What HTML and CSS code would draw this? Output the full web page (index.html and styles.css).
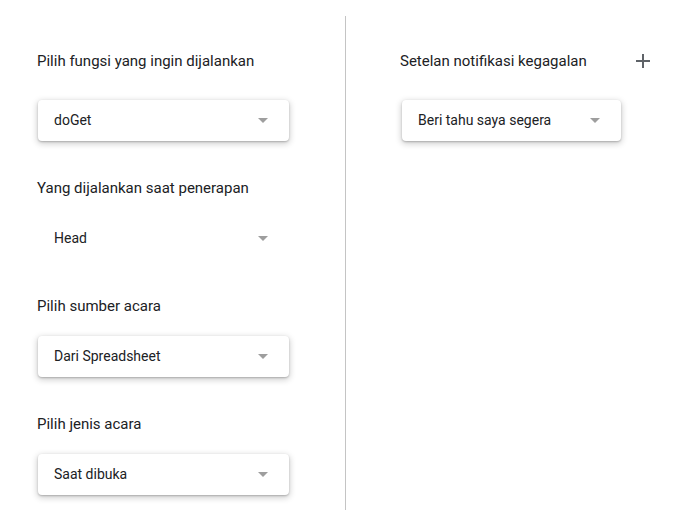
FILE: index.html
```html
<!DOCTYPE html>
<html lang="id">
<head>
<meta charset="utf-8">
<link rel="stylesheet" href="styles.css">
</head>
<body>
<div class="page">
  <div class="col-left">
    <section class="field field--first">
      <div class="label">Pilih fungsi yang ingin dijalankan</div>
      <div class="select select--card"><span class="select-text">doGet</span><span class="arrow"></span></div>
    </section>
    <section class="field">
      <div class="label">Yang dijalankan saat penerapan</div>
      <div class="select"><span class="select-text">Head</span><span class="arrow"></span></div>
    </section>
    <section class="field">
      <div class="label">Pilih sumber acara</div>
      <div class="select select--card"><span class="select-text">Dari Spreadsheet</span><span class="arrow"></span></div>
    </section>
    <section class="field">
      <div class="label">Pilih jenis acara</div>
      <div class="select select--card"><span class="select-text">Saat dibuka</span><span class="arrow"></span></div>
    </section>
  </div>
  <div class="divider"></div>
  <div class="col-right">
    <section class="field field--first">
      <div class="header-row">
        <div class="label">Setelan notifikasi kegagalan</div>
        <svg class="plus" width="14" height="14" viewBox="0 0 14 14"><path d="M7 0v14M0 7h14" stroke="#5f6368" stroke-width="2"/></svg>
      </div>
      <div class="select select--card select--narrow"><span class="select-text">Beri tahu saya segera</span><span class="arrow"></span></div>
    </section>
  </div>
</div>
</body>
</html>
```

FILE: styles.css
```css
* { box-sizing: border-box; }
html, body { margin: 0; padding: 0; background: #fff; }
body {
  font-family: Roboto, "Liberation Sans", Arial, sans-serif;
  color: #202124;
  width: 693px;
  height: 525px;
  overflow: hidden;
}
.page {
  display: flex;
  align-items: flex-start;
  padding-top: 16px;
}
.col-left {
  width: 345px;
  padding-left: 37px;
  padding-top: 35px;
}
.divider {
  width: 1px;
  height: 494px;
  background: #c4c4c4;
}
.col-right {
  padding-left: 54px;
  padding-top: 35px;
}
.field { margin-bottom: 37px; }
.field:last-child { margin-bottom: 0; }
.label {
  font-size: 15px;
  line-height: 20px;
  height: 20px;
  color: #202124;
  margin-bottom: 20px;
}
.field--first .label { margin-bottom: 29px; }
.header-row {
  display: flex;
  align-items: center;
  justify-content: space-between;
  width: 250px;
}
.header-row .label { margin-bottom: 29px; }
.plus { margin-bottom: 29px; }
.select {
  display: flex;
  align-items: center;
  justify-content: space-between;
  width: 251px;
  height: 41px;
  margin-left: 1px;
  padding: 0 21px 1px 16px;
  border-radius: 4px;
  font-size: 14px;
}
.select--card {
  background: #fff;
  box-shadow: 0 1px 2px rgba(0, 0, 0, 0.22), 0 2px 6px 1px rgba(0, 0, 0, 0.18);
}
.select--narrow {
  width: 219px;
  margin-left: 2px;
}
.select-text { color: #202124; }
.arrow {
  width: 0;
  height: 0;
  margin-top: 1px;
  border-left: 5px solid transparent;
  border-right: 5px solid transparent;
  border-top: 5px solid #9e9e9e;
}
```
